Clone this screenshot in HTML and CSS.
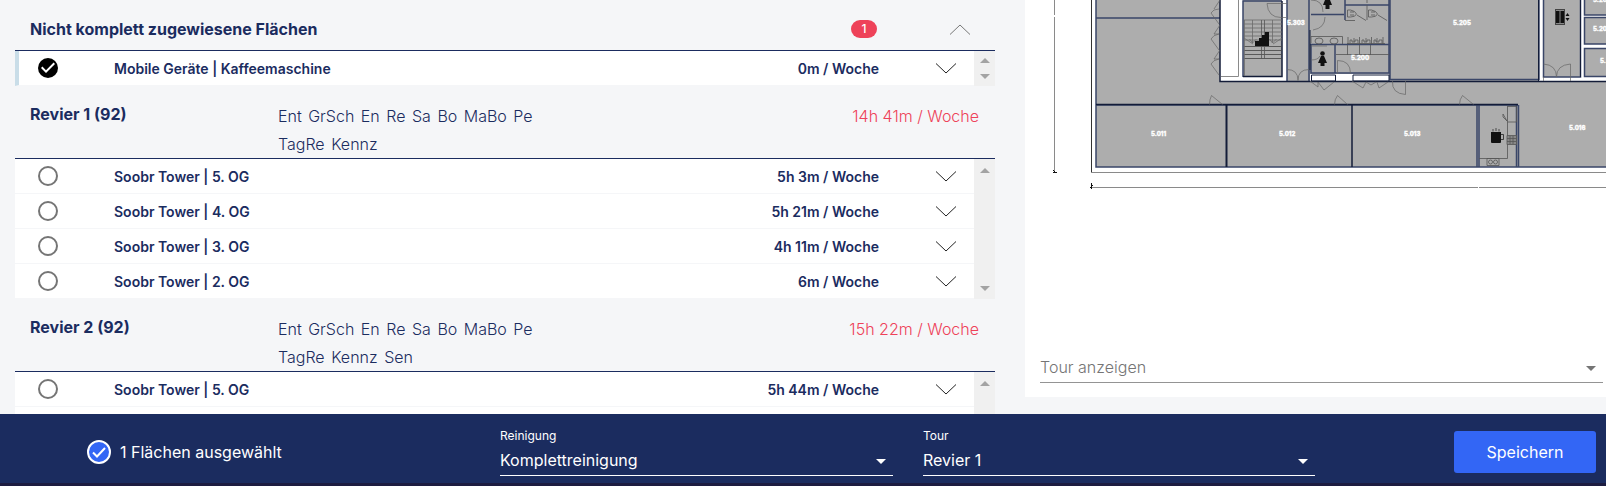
FILE: index.html
```html
<!DOCTYPE html>
<html lang="de">
<head>
  <meta charset="UTF-8" />
  <meta name="viewport" content="width=device-width, initial-scale=1.0"/>
  <title>Tourenplanung</title>
  <link rel="stylesheet" href="styles.css">
</head>
<body>
  <svg class="defs" width="0" height="0">
    <symbol id="chevron" viewBox="0 0 20 11"><path d="M0 0.5L10 10L20 0.5" fill="none" stroke="currentColor"/></symbol>
    <symbol id="arrow" viewBox="0 0 10 5"><path d="M0 0h10L5 5z" fill="currentColor"/></symbol>
  </svg>

  <main class="content">
    <div class="list">
      <section class="group">
        <header class="group-head open">
          <h2>Nicht komplett zugewiesene Flächen</h2>
          <span class="badge">1</span>
          <button class="toggle up" aria-label="Zuklappen"><svg><use href="#chevron"/></svg></button>
        </header>
        <div class="scroll">
          <div class="rows">
            <div class="row selected">
              <input type="checkbox" id="a0" checked>
              <label for="a0">Mobile Geräte | Kaffeemaschine</label>
              <span class="time">0m / Woche</span>
              <button class="toggle" aria-label="Aufklappen"><svg><use href="#chevron"/></svg></button>
            </div>
          </div>
          <div class="scrollbar short"><svg class="up"><use href="#arrow"/></svg><svg><use href="#arrow"/></svg></div>
        </div>
      </section>

      <section class="group">
        <header class="group-head">
          <h2>Revier 1 (92)</h2>
          <p class="tags"><span>Ent</span> <span>GrSch</span> <span>En</span> <span>Re</span> <span>Sa</span> <span>Bo</span> <span>MaBo</span> <span>Pe</span> <span>TagRe</span> <span>Kennz</span></p>
          <span class="total">14h 41m / Woche</span>
        </header>
        <div class="scroll">
          <div class="rows">
            <div class="row">
              <input type="checkbox" id="a1">
              <label for="a1">Soobr Tower | 5. OG</label>
              <span class="time">5h 3m / Woche</span>
              <button class="toggle" aria-label="Aufklappen"><svg><use href="#chevron"/></svg></button>
            </div>
            <div class="row">
              <input type="checkbox" id="a2">
              <label for="a2">Soobr Tower | 4. OG</label>
              <span class="time">5h 21m / Woche</span>
              <button class="toggle" aria-label="Aufklappen"><svg><use href="#chevron"/></svg></button>
            </div>
            <div class="row">
              <input type="checkbox" id="a3">
              <label for="a3">Soobr Tower | 3. OG</label>
              <span class="time">4h 11m / Woche</span>
              <button class="toggle" aria-label="Aufklappen"><svg><use href="#chevron"/></svg></button>
            </div>
            <div class="row">
              <input type="checkbox" id="a4">
              <label for="a4">Soobr Tower | 2. OG</label>
              <span class="time">6m / Woche</span>
              <button class="toggle" aria-label="Aufklappen"><svg><use href="#chevron"/></svg></button>
            </div>
          </div>
          <div class="scrollbar"><svg class="up"><use href="#arrow"/></svg><svg><use href="#arrow"/></svg></div>
        </div>
      </section>

      <section class="group">
        <header class="group-head">
          <h2>Revier 2 (92)</h2>
          <p class="tags"><span>Ent</span> <span>GrSch</span> <span>En</span> <span>Re</span> <span>Sa</span> <span>Bo</span> <span>MaBo</span> <span>Pe</span> <span>TagRe</span> <span>Kennz</span> <span>Sen</span></p>
          <span class="total">15h 22m / Woche</span>
        </header>
        <div class="scroll">
          <div class="rows">
            <div class="row">
              <input type="checkbox" id="b1">
              <label for="b1">Soobr Tower | 5. OG</label>
              <span class="time">5h 44m / Woche</span>
              <button class="toggle" aria-label="Aufklappen"><svg><use href="#chevron"/></svg></button>
            </div>
            <div class="row"></div>
          </div>
          <div class="scrollbar"><svg class="up"><use href="#arrow"/></svg></div>
        </div>
      </section>
    </div>

    <div class="map">
      <svg class="plan" viewBox="1025 0 581 340" preserveAspectRatio="xMinYMin meet">
        <!-- floor -->
        <rect x="1096" y="0" width="510" height="167" fill="#adadad"/>
        <path fill="#fff" d="M1220 0h23v77h39V0h5v81h-67zM1539 0h4v77h37V0h4v15h22v2h-22v27h22v4h-22v29h22v4h-67zM1310 74h79v7h-79z"/>

        <!-- outer lines and dimensions -->
        <g fill="none" stroke="#8a8a8a">
          <path d="M1091 172.5H1606M1091 187.5H1478M1479 187.5H1606M1054.5 0V15M1054.5 17V172"/>
          <path d="M1091.5 0V172" stroke="#333"/>
          <path d="M1091.5 183v6M1090 188l3-3M1053 170l3 3M1053 172.5h4" stroke="#111"/>
          <path d="M1238.500 0V76.500H1221"/>
        </g>

        <!-- walls -->
        <g fill="none" stroke="#3a4668" stroke-width="1.500">
          <path d="M1096 0V167H1606M1096 18H1220M1096 105H1518"/>
          <path d="M1243 77V1h39M1287 0V81M1309 0V81M1390 0V79.500H1539V0M1543.500 0V77h37V0"/>
          <path d="M1345 0V20M1311 14.500h33M1345 5h44M1310 44.500h79M1335 45V73M1311 45V73h78V0"/>
          <path d="M1477 105V167M1479 105V167M1516.500 105V167M1518.500 105V167"/>
          <path d="M1606 15h-21.500V0M1606 17.500h-21.500v26.500H1606M1606 48.500h-21.500V76.500H1606"/>
        </g>
        <g fill="none" stroke="#131c38" stroke-width="1.500">
          <path d="M1220 0V81.500H1606M1282 1V76.500h-39M1096 104.500H1518M1352 105V167"/>
          <path d="M1580.500 0V77M1538.500 0V81M1310 30V70M1311.500 75h24v6h-24zM1353 75h36v6h-36z" stroke-width="1"/>
          <path d="M1226.500 105V167" stroke-width="2"/>
        </g>

        <!-- doors -->
        <g fill="none" stroke="#666" stroke-width="0.700">
          <path d="M1220 0l-6 9M1211 13q2-4 8-4M1211 13l8 11M1220 25l-6 9h5M1211 39q2-4 8-5M1211 39l8 11M1220 50l-6 9h5M1211 64q2-4 8-5M1211 64l8 11"/>
          <path d="M1222.500 104.500l-11-9q-2 4-2 9M1347.500 104.500l-10-9q-3 4-3 9M1473.500 104.500l-11-9q-3 4-3 9"/>
          <path d="M1287 3.500h-20q1 14 14 14h5M1287 69.500q11 0 11 11M1309 69.500q-11 0-11 11"/>
          <path d="M1543.500 64q13 1 13 13M1570.500 64q-14 1-14 13M1570.500 64v17M1543.500 77v4"/>
          <path d="M1405.500 81v13.500q-14-1-13-13.500M1310 81l8 6v-5M1318 82l6 8 10-8M1352 81l11 7 3-6M1366 82l5 3 5-3M1377 82l2 6 9-6"/>
          <path d="M1337.500 74V60.500q13 0 13 13M1325 17q0 11-12 13M1311 0q12 0 12 12M1311 46h16M1311 60q7 0 9-4"/>
        </g>

        <!-- stairs -->
        <g fill="none" stroke="#6b6b6b" stroke-width="0.800">
          <path d="M1244 20h38M1244 24h38M1244 28h38M1244 32h38M1244 36h38M1244 40h38"/>
          <path d="M1244 46.500h38M1244 50.500h38M1244 54.500h38M1244 58.500h38" stroke="#444"/>
          <path d="M1244.500 20V76M1252.500 20V43l-3-4M1252.500 43l4-4M1272.500 20V43l-3-4M1272.500 43l4-4M1244 38l9 6M1282 38l-9 6"/>
          <path d="M1261.500 20V59M1264.500 20V59" stroke="#555"/>
        </g>
        <path fill="#111" d="M1255 46v-5h4v-3h3v-3h3v-3h4v14z"/>

        <!-- washrooms -->
        <g fill="none" stroke="#555" stroke-width="0.800">
          <path d="M1311 43v-6.500h31.500V44M1348 37v7M1359.500 37v7M1371.500 37v7M1383 37v7M1347 43.500h38"/>
          <ellipse cx="1319" cy="41" rx="4" ry="3"/>
          <ellipse cx="1334" cy="41" rx="4" ry="3"/>
          <path d="M1350 43v-3h2v2h3v-2h3v3M1362 43v-3h2v2h3v-2h3v3M1374 43v-3h2v2h3v-2h3v3M1354 38v4M1366 38v4M1377 38v4"/>
          <path d="M1347.500 10v7h3q5 0 6-3-1-3-6-4zM1350 12h4M1350 15h4M1368.500 10v7h3q5 0 6-3-1-3-6-4zM1371 12h4M1371 15h4"/>
          <path d="M1357 15l9 5.500M1378 15l9 5.500M1345 20.500h10M1367 0v3M1367 5V20M1336 54.500h53M1347.500 45v10M1359.500 45v10M1370.500 45v10"/>
        </g>
        <g fill="#111">
          <circle cx="1322.500" cy="53.500" r="2.300"/>
          <path d="M1321 56h3l3 7h-2.500v3h-4v-3h-2.500z"/>
          <path d="M1325 0h5l2 5h-2.500v4h-4V5h-2.500z"/>
        </g>

        <!-- lift -->
        <rect x="1555.500" y="9.500" width="9" height="15" fill="#888" stroke="#444"/>
        <path fill="#111" d="M1556 11h3.500v12h-3.500zM1560.500 11h3.500v12h-3.500zM1565.500 16l2-3 2 3zM1565.500 18l2 3 2-3z"/>

        <!-- kitchen -->
        <g fill="none" stroke="#555" stroke-width="0.800">
          <path d="M1507.500 106V158.500H1479M1507.500 106.500h9v15.500h-9M1503 114l4 7M1503 114v3l4 4"/>
          <path d="M1487 158.500h12v7h-12z"/>
          <circle cx="1490.500" cy="162" r="2"/>
          <circle cx="1495.500" cy="162" r="2"/>
          <path d="M1507 135.500h9.500v9h-9.500zM1507 138.500h9M1507 141.500h9M1510 136v8M1513 136v8" fill="#888"/>
          <path d="M1501 134.500h2.500v5h-2.500" stroke="#222"/>
          <path d="M1493 129v2.500M1496 128v3M1499 129v2.500" stroke="#333"/>
        </g>
        <path fill="#111" d="M1491 132h10v10q0 1-1 1h-8q-1 0-1-1z"/>

        <g class="room">
          <text x="1151" y="136">5.011</text>
          <text x="1279" y="136">5.012</text>
          <text x="1404" y="136">5.013</text>
          <text x="1569" y="130">5.016</text>
          <text x="1287" y="25">5.303</text>
          <text x="1351" y="60">5.200</text>
          <text x="1453" y="25">5.205</text>
          <text x="1593" y="2">5.20</text>
          <text x="1593" y="31">5.20</text>
          <text x="1600" y="63">5.</text>
        </g>
      </svg>
      <div class="field tour-filter">
        <select aria-label="Tour anzeigen">
          <option>Tour anzeigen</option>
        </select>
        <svg class="caret"><use href="#arrow"/></svg>
      </div>
    </div>
  </main>

  <footer class="bar">
    <div class="count">
      <svg viewBox="0 0 24 24" width="24" height="24">
        <circle cx="12" cy="12" r="11" fill="#3366f5" stroke="#fff" stroke-width="2"/>
        <path d="M6 12.500l4 4L18 8" fill="none" stroke="#fff" stroke-width="2"/>
      </svg>
      <span>1 Flächen ausgewählt</span>
    </div>
    <div class="field">
      <label for="cleaning">Reinigung</label>
      <select id="cleaning">
        <option>Komplettreinigung</option>
      </select>
      <svg class="caret"><use href="#arrow"/></svg>
    </div>
    <div class="field">
      <label for="tour">Tour</label>
      <select id="tour">
        <option>Revier 1</option>
        <option>Revier 2</option>
      </select>
      <svg class="caret"><use href="#arrow"/></svg>
    </div>
    <button class="save">Speichern</button>
  </footer>
</body>
</html>
```

FILE: styles.css
```css
* {
  box-sizing: border-box;
}

body {
  margin: 0;
  height: 100vh;
  display: flex;
  flex-direction: column;
  overflow: hidden;
  background: #f5f6f8;
  color: #1b2c5f;
  font-family: Inter, "Liberation Sans", sans-serif;
  font-size: 16px;
}

button {
  font: inherit;
  border: none;
  padding: 0;
  background: none;
  cursor: pointer;
}

.defs {
  position: absolute;
}

.content {
  flex: 1;
  min-height: 0;
  overflow: hidden;
  display: grid;
  grid-template-columns: 980fr 581fr;
  grid-template-rows: minmax(0, 1fr);
  gap: 30px;
  padding-left: 15px;
}

/* area list */
.list {
  min-width: 0;
}

.group-head {
  display: grid;
  grid-template-columns: 248px 270px 1fr;
  height: 73px;
  padding: 16px 16px 0 15px;
  border-bottom: 1px solid #1b2c5f;
}

.group-head.open {
  grid-template-columns: 1fr 26px 20px;
  column-gap: 73px;
  align-items: center;
  height: 51px;
  padding: 8px 25px 0 15px;
}

h2 {
  margin: 0;
  font-size: 16px;
  font-weight: 700;
  line-height: 24px;
}

.tags {
  margin: 0;
  font-weight: 300;
  line-height: 28px;
}

.tags span {
  margin-right: 2px;
}

.total {
  text-align: right;
  font-weight: 300;
  line-height: 28px;
  color: #ee4259;
}

.badge {
  height: 18px;
  border-radius: 9px;
  background: #ee4259;
  color: #fff;
  font-size: 12px;
  font-weight: 500;
  line-height: 18px;
  text-align: center;
}

.toggle {
  display: flex;
  color: #222;
}

.toggle svg {
  width: 20px;
  height: 11px;
}

.toggle.up {
  color: #777;
}

.up svg, svg.up {
  transform: rotate(180deg);
}

.scroll {
  display: flex;
}

.rows {
  flex: 1;
  background: #fff;
}

.row {
  display: grid;
  grid-template-columns: 72px 1fr auto 20px;
  align-items: center;
  height: 35px;
  padding: 0 18px 0 23px;
  border-bottom: 1px solid #f5f6f8;
  font-size: 14px;
  font-weight: 600;
}

.row.selected {
  padding-left: 19px;
  border-left: 4px solid #c9dde8;
}

.row label {
  padding-left: 4px;
}

.time {
  margin-right: 57px;
}

input[type="checkbox"] {
  appearance: none;
  width: 20px;
  height: 20px;
  margin: 0;
  border: 2px solid #757575;
  border-radius: 50%;
}

input[type="checkbox"]:checked {
  border: none;
  background: #000;
}

input[type="checkbox"]:checked::after {
  content: "";
  display: block;
  height: 20px;
  background: #fff;
  clip-path: polygon(40% 75%, 15% 50%, 22% 43%, 40% 61%, 78% 23%, 85% 30%);
}

.scrollbar {
  width: 21px;
  display: flex;
  flex-direction: column;
  justify-content: space-between;
  align-items: center;
  padding: 9px 0 8px;
  background: #f0f0f0;
  color: #a3a3a3;
}

.scrollbar.short {
  padding: 7px 0;
}

.scrollbar svg {
  width: 10px;
  height: 5px;
}

/* floor plan */
.map {
  display: flex;
  flex-direction: column;
  min-width: 0;
  margin-bottom: 17px;
  background: #fff;
}

.plan {
  flex: 1;
  width: 100%;
  min-height: 0;
}

.room {
  fill: #fff;
  stroke: #fff;
  stroke-width: 0.3;
  font-size: 6px;
  font-weight: 800;
}

/* select fields */
.field {
  position: relative;
  display: flex;
  flex-direction: column;
}

.field label {
  font-size: 12px;
  line-height: 16px;
}

.field select {
  appearance: none;
  width: 100%;
  height: 32px;
  padding: 0;
  border: none;
  border-bottom: 1px solid #fff;
  border-radius: 0;
  background: none;
  color: inherit;
  font: inherit;
}

.field .caret {
  position: absolute;
  right: 7px;
  bottom: 12px;
  width: 10px;
  height: 5px;
}

.tour-filter {
  margin: 11px 3px 14px 15px;
  color: #757575;
}

.tour-filter select {
  border-color: #949494;
  font-weight: 300;
}

/* bottom bar */
.bar {
  display: grid;
  grid-template-columns: 383fr 393fr 392fr 251fr;
  gap: 30px;
  align-items: start;
  height: 72px;
  padding: 14px 10px 0 87px;
  border-bottom: 3px solid #1d1c40;
  background: #1b2c5f;
  color: #fff;
}

.count {
  display: flex;
  align-items: center;
  gap: 9px;
  padding-top: 12px;
}

.save {
  justify-self: end;
  width: 142px;
  height: 42px;
  margin-top: 3px;
  border-radius: 3px;
  background: #3366f5;
  color: #fff;
}
```
